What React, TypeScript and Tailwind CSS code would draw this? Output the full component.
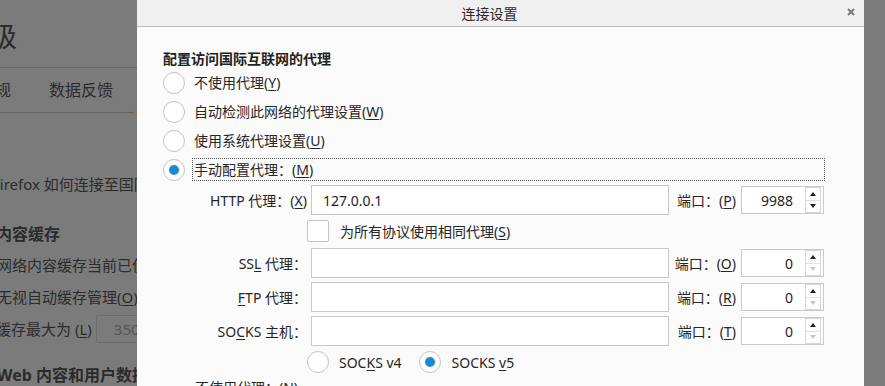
import React from "react";

const FONT = "font-['Noto_Sans','Noto_Sans_CJK_SC',sans-serif]";

function Radio({ checked }: { checked?: boolean }) {
  return (
    <span className="w-[22px] h-[22px] rounded-full border border-[#c4c4c4] bg-white flex items-center justify-center shrink-0">
      {checked && <span className="w-[10px] h-[10px] rounded-full bg-[#1e88d4]" />}
    </span>
  );
}

function Tri({ up, color }: { up?: boolean; color: string }) {
  return (
    <svg width="6" height="4" viewBox="0 0 6 4">
      {up ? <polygon points="0,4 6,4 3,0" fill={color} /> : <polygon points="0,0 6,0 3,4" fill={color} />}
    </svg>
  );
}

function PortInput({ value, downDisabled }: { value: string; downDisabled?: boolean }) {
  return (
    <div className="w-[83px] h-[28px] border border-[#c9c9c9] bg-white flex items-center shrink-0">
      <span className="flex-1 text-right pr-[12px] text-[14px] text-[#1e1e1e]">{value}</span>
      <div className="w-[16px] h-[26px] mr-[2px] flex flex-col border border-[#d6d6d6] bg-[#fdfdfd]">
        <div className="flex-1 flex items-center justify-center border-b border-[#e2e2e2]">
          <Tri up color="#222" />
        </div>
        <div className="flex-1 flex items-center justify-center">
          <Tri color={downDisabled ? "#c8c8c8" : "#222"} />
        </div>
      </div>
    </div>
  );
}

function ProxyRow({
  label,
  value,
  portLabel,
  port,
  downDisabled,
  className,
}: {
  label: React.ReactNode;
  value?: string;
  portLabel: React.ReactNode;
  port: string;
  downDisabled?: boolean;
  className?: string;
}) {
  return (
    <div className={"flex items-center h-[30px] " + (className ?? "")}>
      <div className="w-[148px] text-right pr-[4px] whitespace-nowrap">{label}</div>
      <div className="w-[358px] h-[30px] border border-[#c9c9c9] bg-white flex items-center pl-[11px] text-[14px] text-[#1e1e1e]">
        {value}
      </div>
      <div className="w-[72px] text-right pr-[5px] whitespace-nowrap">{portLabel}</div>
      <PortInput value={port} downDisabled={downDisabled} />
    </div>
  );
}

const U = ({ children }: { children: React.ReactNode }) => (
  <u className="underline underline-offset-[2px] decoration-[1px]">{children}</u>
);

export default function App() {
  return (
    <div className={"w-[885px] h-[386px] flex overflow-hidden bg-[#7b7b7b] " + FONT}>
      {/* background page (dimmed) */}
      <div className="w-[137px] shrink-0 overflow-hidden flex flex-col text-[#2b2b2b] whitespace-nowrap">
        <div className="h-[70px] border-b border-[#646464] flex items-center pt-[4px]">
          <span className="text-[28px] ml-[-39px] leading-none">高级</span>
        </div>
        <div className="h-[46px] border-b border-[#646464] flex items-center text-[16px] relative">
          <span className="ml-[-21px]">常规</span>
          <span className="ml-[38px]">数据反馈</span>
          <span className="absolute right-0 bottom-[-2px] w-[3px] h-[3px] bg-[#b8672e]" />
        </div>
        <div className="mt-[60px] h-[22px] leading-[22px] text-[15px] ml-[-8px]">Firefox 如何连接至国际互联网</div>
        <div className="mt-[28px] h-[22px] leading-[22px] text-[16px] font-bold ml-[-4px]">内容缓存</div>
        <div className="mt-[9px] h-[22px] leading-[22px] text-[15px] ml-[-3px]">网络内容缓存当前已使用</div>
        <div className="mt-[10px] h-[22px] leading-[22px] text-[15px] ml-[-3px]">
          无视自动缓存管理(<U>O</U>)
        </div>
        <div className="mt-[7px] h-[28px] flex items-center text-[15px] ml-[-4px]">
          <span>缓存最大为 (<U>L</U>)</span>
          <span className="ml-[4px] w-[60px] h-[28px] shrink-0 border border-[#6c6c6c] rounded-[2px] flex items-center pl-[17px] text-[#555]">
            350
          </span>
        </div>
        <div className="mt-[21px] h-[22px] leading-[22px] text-[16px] font-bold ml-[-3px]">Web 内容和用户数据</div>
      </div>

      {/* dialog */}
      <div className="w-[727px] shrink-0 flex flex-col bg-[#fbfbfb] text-[14px] text-[#262626]">
        <div className="h-[27px] shrink-0 bg-[#f0f0f0] border-b border-[#bebebe] flex items-center justify-center relative">
          <span className="text-[14px] text-[#2a2a2a] mr-[22px]">连接设置</span>
          <svg className="absolute right-[9px] top-[8px]" width="8" height="8" viewBox="0 0 8 8">
            <path d="M1 1L7 7M7 1L1 7" stroke="#7a7a7a" strokeWidth="2" />
          </svg>
        </div>
        <div className="pl-[26px] flex flex-col w-[688px]">
          <div className="mt-[23px] h-[18px] leading-[18px] font-semibold text-[14px] text-[#222]">
            配置访问国际互联网的代理
          </div>
          <div className="h-[29px] flex items-center">
            <Radio />
            <span className="ml-[9px]">
              不使用代理(<U>Y</U>)
            </span>
          </div>
          <div className="h-[29px] flex items-center">
            <Radio />
            <span className="ml-[9px]">
              自动检测此网络的代理设置(<U>W</U>)
            </span>
          </div>
          <div className="h-[29px] flex items-center">
            <Radio />
            <span className="ml-[9px]">
              使用系统代理设置(<U>U</U>)
            </span>
          </div>
          <div className="h-[29px] flex items-center">
            <Radio checked />
            <div className="ml-[7px] w-[633px] h-[23px] border border-dotted border-[#555] flex items-center pl-[1px]">
              手动配置代理：(<U>M</U>)
            </div>
          </div>

          <ProxyRow
            className="mt-[1px]"
            label={
              <>
                HTTP 代理：(<U>X</U>)
              </>
            }
            value="127.0.0.1"
            portLabel={
              <>
                端口：(<U>P</U>)
              </>
            }
            port="9988"
          />

          <div className="mt-[5px] h-[22px] flex items-center">
            <span className="ml-[144px] w-[22px] h-[22px] border border-[#c4c4c4] bg-white rounded-[2px]" />
            <span className="ml-[11px]">
              为所有协议使用相同代理(<U>S</U>)
            </span>
          </div>

          <ProxyRow
            className="mt-[6px]"
            label={
              <>
                SS<U>L</U> 代理：
              </>
            }
            portLabel={
              <>
                端口：(<U>O</U>)
              </>
            }
            port="0"
            downDisabled
          />
          <ProxyRow
            className="mt-[4px]"
            label={
              <>
                <U>F</U>TP 代理：
              </>
            }
            portLabel={
              <>
                端口：(<U>R</U>)
              </>
            }
            port="0"
            downDisabled
          />
          <ProxyRow
            className="mt-[4px]"
            label={
              <>
                SO<U>C</U>KS 主机：
              </>
            }
            portLabel={
              <>
                端口：(<U>T</U>)
              </>
            }
            port="0"
            downDisabled
          />

          <div className="mt-[5px] h-[22px] flex items-center">
            <span className="ml-[144px]">
              <Radio />
            </span>
            <span className="ml-[10px]">
              SOC<U>K</U>S v4
            </span>
            <span className="ml-[17px]">
              <Radio checked />
            </span>
            <span className="ml-[11px]">
              SOCKS <U>v</U>5
            </span>
          </div>
          <div className="mt-[5px] h-[20px] leading-[20px] ml-[32px]">
            不使用代理：(<U>N</U>)
          </div>
        </div>
      </div>
    </div>
  );
}
